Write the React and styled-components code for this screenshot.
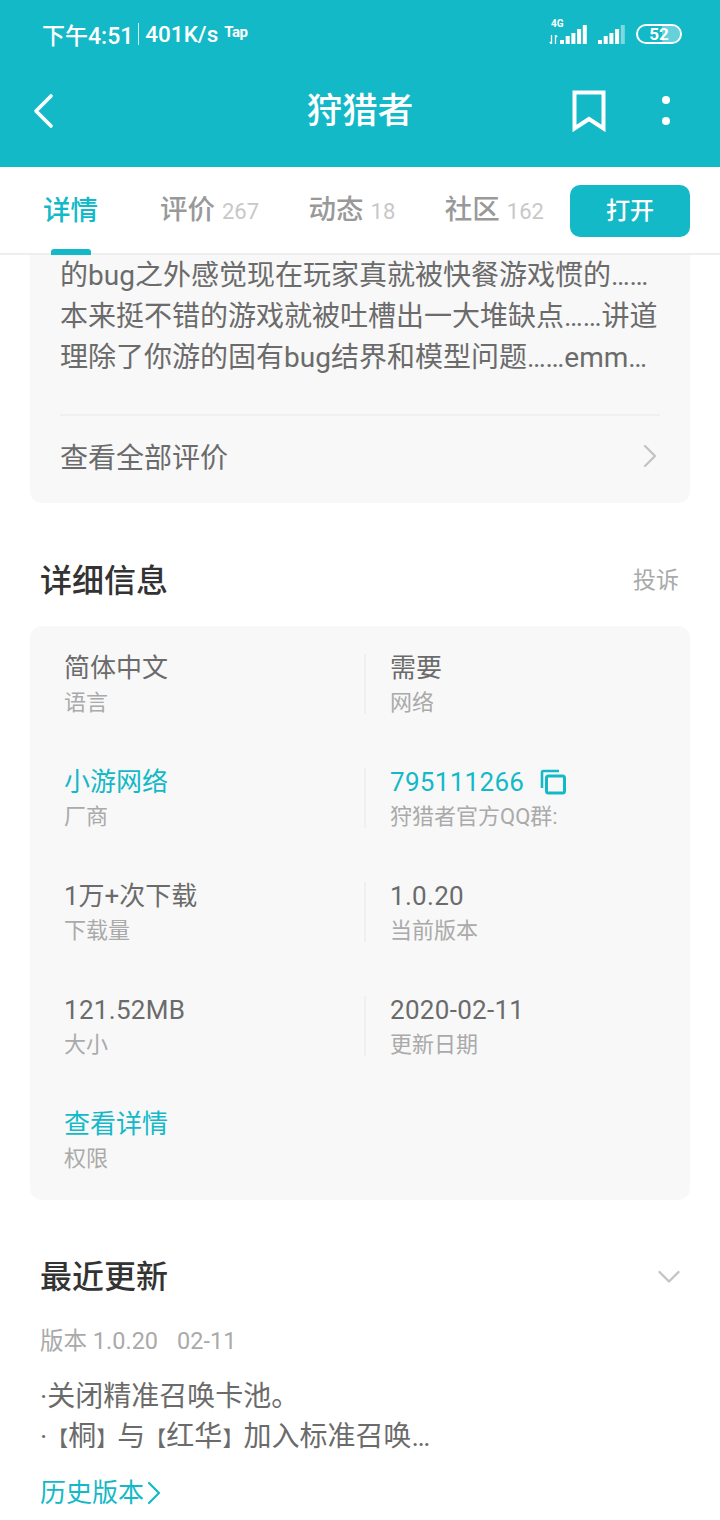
import styled, { createGlobalStyle } from 'styled-components';

const TEAL = '#14b9c8';
const FONT = 'Roboto, "Noto Sans CJK SC", sans-serif';

const GlobalStyle = createGlobalStyle`
  html, body {
    margin: 0;
    padding: 0;
    background: #fff;
  }

  body {
    font-family: ${FONT};
  }
`;

const details = [
  [
    { value: '简体中文', label: '语言' },
    { value: '需要', label: '网络' },
  ],
  [
    { value: '小游网络', label: '厂商', accent: true },
    { value: '795111266', label: '狩猎者官方QQ群:', accent: true, copy: true, numeric: true },
  ],
  [
    { value: '1万+次下载', label: '下载量' },
    { value: '1.0.20', label: '当前版本', numeric: true },
  ],
  [
    { value: '121.52MB', label: '大小', numeric: true },
    { value: '2020-02-11', label: '更新日期', numeric: true },
  ],
  [{ value: '查看详情', label: '权限', accent: true }],
];

function SignalBars({ dim }) {
  const bars = [4, 8, 11, 15, 19];
  return (
    <svg width="27" height="20" viewBox="0 0 27 20">
      {bars.map((h, i) => (
        <rect
          key={h}
          x={i * 5.7}
          y={20 - h}
          width="4"
          height={h}
          fill="#fff"
          opacity={dim && i === 4 ? 0.45 : 1}
        />
      ))}
    </svg>
  );
}

export default function App() {
  return (
    <Page>
      <GlobalStyle />
      <Header>
        <StatusBar>
          <StatusLeft>
            <Clock>下午4:51</Clock>
            <StatusDivider />
            <Speed>401K/s</Speed>
            <TapMark>Tap</TapMark>
          </StatusLeft>
          <StatusRight>
            <NetworkIcon>
              <NetworkLabel>4G</NetworkLabel>
              <NetworkArrows>
                <svg width="9" height="9" viewBox="0 0 9 9">
                  <path d="M2.5 0v9M2.5 9L.8 7M6.5 9V0M6.5 0L8.2 2" stroke="#fff" strokeWidth="1.3" fill="none" />
                </svg>
              </NetworkArrows>
              <SignalBars />
            </NetworkIcon>
            <SignalBars dim />
            <Battery>
              <BatteryLevel />
              <BatteryText>52</BatteryText>
            </Battery>
          </StatusRight>
        </StatusBar>
        <NavBar>
          <svg width="24" height="36" viewBox="0 0 24 36">
            <path d="M19 3L4 18l15 15" stroke="#fff" strokeWidth="3.6" fill="none" strokeLinecap="round" strokeLinejoin="round" />
          </svg>
          <NavTitle>狩猎者</NavTitle>
          <NavActions>
            <svg width="36" height="42" viewBox="0 0 36 42">
              <path d="M3.5 2.5h29v36L18 29 3.5 38.5z" stroke="#fff" strokeWidth="4" fill="none" />
            </svg>
            <MoreDots>
              <Dot />
              <Dot />
            </MoreDots>
          </NavActions>
        </NavBar>
      </Header>

      <Tabs>
        <Tab $active>详情</Tab>
        <Tab>
          评价<TabCount>267</TabCount>
        </Tab>
        <Tab>
          动态<TabCount>18</TabCount>
        </Tab>
        <Tab>
          社区<TabCount>162</TabCount>
        </Tab>
        <OpenButton>打开</OpenButton>
      </Tabs>

      <ReviewCard>
        <ReviewLine>的bug之外感觉现在玩家真就被快餐游戏惯的……</ReviewLine>
        <ReviewLine>本来挺不错的游戏就被吐槽出一大堆缺点……讲道</ReviewLine>
        <ReviewLine>理除了你游的固有bug结界和模型问题……emm…</ReviewLine>
        <AllReviews>
          查看全部评价
          <svg width="14" height="24" viewBox="0 0 14 24">
            <path d="M2 2l10 10L2 22" stroke="#c4c4c4" strokeWidth="2.4" fill="none" strokeLinecap="round" strokeLinejoin="round" />
          </svg>
        </AllReviews>
      </ReviewCard>

      <SectionHead>
        <SectionTitle>详细信息</SectionTitle>
        <ReportLink>投诉</ReportLink>
      </SectionHead>

      <DetailCard>
        {details.map((row, i) => (
          <DetailRow key={i}>
            {row.map((item, j) => (
              <DetailCell key={item.label} $second={j === 1}>
                <DetailValue $accent={item.accent} $numeric={item.numeric}>
                  {item.value}
                  {item.copy && (
                    <svg width="26" height="26" viewBox="0 0 26 26">
                      <path d="M2 19V3.5C2 2.5 2.5 2 3.5 2H19" stroke={TEAL} strokeWidth="2.6" fill="none" />
                      <rect x="6.5" y="7" width="18" height="17" rx="2" stroke={TEAL} strokeWidth="3" fill="none" />
                    </svg>
                  )}
                </DetailValue>
                <DetailLabel>{item.label}</DetailLabel>
              </DetailCell>
            ))}
          </DetailRow>
        ))}
      </DetailCard>

      <UpdateHead>
        <SectionTitle>最近更新</SectionTitle>
        <svg width="22" height="14" viewBox="0 0 22 14">
          <path d="M1.5 2L11 11.5 20.5 2" stroke="#c4c4c4" strokeWidth="2.4" fill="none" strokeLinecap="round" strokeLinejoin="round" />
        </svg>
      </UpdateHead>
      <VersionLine>
        <span>版本 1.0.20</span>
        <span>02-11</span>
      </VersionLine>
      <UpdateText>
        <div>·关闭精准召唤卡池。</div>
        <div>
          ·<Bracket>【</Bracket>桐<Bracket>】</Bracket>与<Bracket>【</Bracket>红华<Bracket>】</Bracket>加入标准召唤…
        </div>
      </UpdateText>
      <HistoryLink>
        历史版本
        <svg width="14" height="24" viewBox="0 0 14 24">
          <path d="M2 2l10 10L2 22" stroke={TEAL} strokeWidth="2.2" fill="none" strokeLinecap="round" strokeLinejoin="round" />
        </svg>
      </HistoryLink>
    </Page>
  );
}

const Page = styled.div`
  width: 720px;
  height: 1520px;
  overflow: hidden;
  background: #fff;
  font-family: ${FONT};
`;

const Header = styled.header`
  height: 167px;
  background: ${TEAL};
  color: #fff;
  display: flex;
  flex-direction: column;
`;

const StatusBar = styled.div`
  height: 68px;
  padding: 0 38px 0 42px;
  display: flex;
  align-items: center;
  justify-content: space-between;
`;

const StatusLeft = styled.div`
  display: flex;
  align-items: center;
`;

const Clock = styled.span`
  font-size: 23px;
  font-weight: 500;
`;

const StatusDivider = styled.i`
  width: 1px;
  height: 22px;
  margin: 0 6px 0 5px;
  background: rgba(255, 255, 255, 0.8);
`;

const Speed = styled.span`
  font-size: 22.5px;
  font-weight: 500;
`;

const TapMark = styled.span`
  margin: -4px 0 0 6px;
  font-size: 15px;
  font-weight: 700;
  letter-spacing: -0.5px;
`;

const StatusRight = styled.div`
  display: flex;
  align-items: center;
  gap: 11px;
`;

const NetworkIcon = styled.div`
  position: relative;
  display: flex;
  align-items: flex-end;
  padding-left: 11px;
`;

const NetworkLabel = styled.span`
  position: absolute;
  left: 2px;
  top: -6px;
  font-size: 10px;
  font-weight: 700;
  line-height: 12px;
`;

const NetworkArrows = styled.span`
  position: absolute;
  left: 0;
  bottom: 0;
  line-height: 0;
`;

const Battery = styled.div`
  position: relative;
  width: 46px;
  height: 20px;
  box-sizing: border-box;
  border: 2px solid #fff;
  border-radius: 10px;
  overflow: hidden;
  display: flex;
  align-items: center;
  justify-content: center;
`;

const BatteryLevel = styled.i`
  position: absolute;
  top: 0;
  right: 0;
  bottom: 0;
  width: 18px;
  background: rgba(255, 255, 255, 0.35);
`;

const BatteryText = styled.span`
  position: relative;
  font-size: 17px;
  font-weight: 700;
  line-height: 1;
`;

const NavBar = styled.nav`
  position: relative;
  flex: 1;
  padding: 0 50px 14px 32px;
  display: flex;
  align-items: center;
  justify-content: space-between;
`;

const NavTitle = styled.h1`
  position: absolute;
  left: 0;
  right: 0;
  top: 21px;
  margin: 0;
  text-align: center;
  font-size: 35.5px;
  font-weight: 500;
  line-height: 44px;
`;

const NavActions = styled.div`
  display: flex;
  align-items: center;
  gap: 55px;
`;

const MoreDots = styled.div`
  display: flex;
  flex-direction: column;
  gap: 13px;
`;

const Dot = styled.i`
  width: 8px;
  height: 8px;
  border-radius: 50%;
  background: #fff;
`;

const Tabs = styled.div`
  height: 88px;
  box-sizing: border-box;
  padding: 0 30px 0 43px;
  border-bottom: 2px solid #eeeeee;
  display: flex;
  align-items: center;
`;

const Tab = styled.div`
  position: relative;
  display: flex;
  align-items: baseline;
  gap: 7px;
  margin-right: ${(p) => (p.$active ? '62px' : '49.5px')};
  padding-top: 2px;
  color: ${(p) => (p.$active ? TEAL : '#999')};
  font-size: 27.5px;
  font-weight: 500;
  line-height: 86px;
  white-space: nowrap;

  &:nth-child(4) {
    margin-right: 0;
  }

  &::after {
    content: '';
    display: ${(p) => (p.$active ? 'block' : 'none')};
    position: absolute;
    left: 8px;
    bottom: -1px;
    width: 40px;
    height: 6px;
    border-radius: 3px 3px 0 0;
    background: ${TEAL};
  }
`;

const TabCount = styled.span`
  color: #c8c8c8;
  font-size: 22px;
  font-weight: 400;
`;

const OpenButton = styled.button`
  margin: 2px 0 0 auto;
  flex: none;
  width: 120px;
  height: 52px;
  padding: 0 0 5px;
  border: 0;
  border-radius: 10px;
  background: ${TEAL};
  color: #fff;
  font-family: ${FONT};
  font-size: 24px;
  font-weight: 500;
`;

const ReviewCard = styled.section`
  margin: 0 30px;
  height: 248px;
  box-sizing: border-box;
  padding: 0 30px;
  background: #f8f8f8;
  border-radius: 0 0 12px 12px;
  display: flex;
  flex-direction: column;
`;

const ReviewLine = styled.div`
  height: 41px;
  line-height: 41px;
  color: #6b6b6b;
  font-size: 28px;
  white-space: nowrap;
`;

const AllReviews = styled.div`
  margin-top: 36px;
  height: 88px;
  padding-bottom: 6px;
  box-sizing: border-box;
  border-top: 2px solid #f0f0f0;
  display: flex;
  align-items: center;
  justify-content: space-between;
  color: #6b6b6b;
  font-size: 28px;

  svg {
    margin-right: 3px;
  }
`;

const SectionHead = styled.div`
  margin-top: 50px;
  height: 50px;
  padding: 0 41px 0 40px;
  display: flex;
  align-items: center;
  justify-content: space-between;
`;

const SectionTitle = styled.h2`
  margin: 0;
  color: #333;
  font-size: 32px;
  font-weight: 500;
`;

const ReportLink = styled.span`
  color: #aaa;
  font-size: 23px;
`;

const DetailCard = styled.section`
  margin: 23px 30px 0;
  height: 574px;
  box-sizing: border-box;
  padding-top: 24px;
  background: #f8f8f8;
  border-radius: 12px;
`;

const DetailRow = styled.div`
  height: 114px;
  display: grid;
  grid-template-columns: 334px 1fr;
`;

const DetailCell = styled.div`
  position: relative;
  padding-left: ${(p) => (p.$second ? '26px' : '34px')};

  &::before {
    content: '';
    display: ${(p) => (p.$second ? 'block' : 'none')};
    position: absolute;
    left: 0;
    top: 4px;
    width: 2px;
    height: 60px;
    background: #f0f0f0;
  }
`;

const DetailValue = styled.div`
  display: flex;
  align-items: center;
  gap: 16px;
  height: 34px;
  margin-top: 1px;
  color: ${(p) => (p.$accent ? TEAL : '#6b6b6b')};
  font-size: 26px;
  line-height: 34px;
  letter-spacing: ${(p) => (p.$numeric ? '0.3px' : '0')};
`;

const DetailLabel = styled.div`
  margin-top: 2px;
  color: #aaa;
  font-size: 22px;
  line-height: 32px;
`;

const UpdateHead = styled.div`
  margin-top: 49px;
  height: 50px;
  padding: 0 40px;
  display: flex;
  align-items: center;
  justify-content: space-between;

  svg {
    margin-top: 5px;
  }
`;

const VersionLine = styled.div`
  margin-top: 25px;
  padding: 0 40px;
  display: flex;
  gap: 19px;
  color: #aaa;
  font-size: 23.5px;
  line-height: 34px;
`;

const UpdateText = styled.div`
  margin-top: 19px;
  padding: 0 40px;
  color: #6b6b6b;
  font-size: 28px;
  line-height: 40px;
  white-space: nowrap;
  text-spacing-trim: space-all;
`;

const Bracket = styled.span`
  font-size: 21px;
`;

const HistoryLink = styled.div`
  margin-top: 14px;
  padding: 0 40px;
  display: flex;
  align-items: center;
  gap: 3px;
  color: ${TEAL};
  font-size: 26px;
  line-height: 40px;
`;
